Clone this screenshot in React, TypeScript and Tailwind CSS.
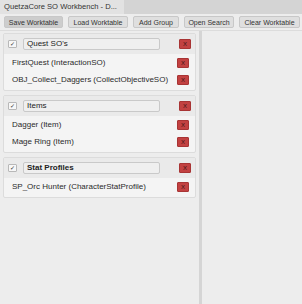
import React from 'react';

type Group = { name: string; bold?: boolean; items: string[] };

const groups: Group[] = [
  { name: "Quest SO's", items: ['FirstQuest (InteractionSO)', 'OBJ_Collect_Daggers (CollectObjectiveSO)'] },
  { name: 'Items', items: ['Dagger (Item)', 'Mage Ring (Item)'] },
  { name: 'Stat Profiles', bold: true, items: ['SP_Orc Hunter (CharacterStatProfile)'] },
];

const toolbar = [
  { label: 'Save Worktable', w: 'w-[59px]', active: true },
  { label: 'Load Worktable', w: 'w-[60px]' },
  { label: 'Add Group', w: 'w-[46px]' },
  { label: 'Open Search', w: 'w-[50px]' },
  { label: 'Clear Worktable', w: 'w-[61px]' },
];

const XButton = () => (
  <div className="w-[12px] h-[10px] bg-[#c24141] border border-[#a83434] rounded-[1px] flex items-center justify-center text-[6px] leading-none text-[#3a1414]">
    X
  </div>
);

const GroupBox = ({ group }: { group: Group }) => (
  <div className="border border-[#dcdcdc] rounded-[2px] bg-[#f4f4f4]">
    <div className="flex items-center h-[20px] bg-[#eaeaea] pl-[4px]">
      <div className="w-[9px] h-[8px] border border-[#b8b8b8] bg-[#f7f7f7] rounded-[1px] flex items-center justify-center text-[6px] leading-none text-[#333]">
        ✓
      </div>
      <div className="ml-[6px] w-[137px] h-[12px] border border-[#c9c9c9] bg-[#efefef] rounded-[2px] pl-[3px] flex items-center">
        <span className={`text-[8px] leading-none whitespace-nowrap text-[#222] ${group.bold ? 'font-semibold' : ''}`}>{group.name}</span>
      </div>
      <div className="ml-auto mr-[4px]">
        <XButton />
      </div>
    </div>
    <div className="pb-[2px]">
      {group.items.map((it) => (
        <div key={it} className="flex items-center h-[17px] pl-[8px]">
          <span className="text-[8px] leading-none whitespace-nowrap text-[#2a2a2a]">{it}</span>
          <div className="ml-auto mr-[6px]">
            <XButton />
          </div>
        </div>
      ))}
    </div>
  </div>
);

export default function App() {
  return (
    <div className="w-[302px] h-[304px] bg-[#ededed] flex flex-col overflow-hidden" style={{ fontFamily: '"Liberation Sans", Arial, sans-serif' }}>
      <div className="h-[14px] bg-[#d4d4d4] flex">
        <div className="w-[124px] bg-[#e2e2e2] pl-[4px] flex items-center text-[7.6px] leading-none whitespace-nowrap text-[#333]">
          QuetzaCore SO Workbench - D...
        </div>
      </div>
      <div className="flex items-center gap-[5px] px-[4px] h-[17px] border-b border-[#dcdcdc]">
        {toolbar.map((t) => (
          <div
            key={t.label}
            className={`${t.w} shrink-0 h-[12px] flex items-center justify-center overflow-hidden rounded-[2px] border border-[#c8c8c8] text-[7px] leading-none text-[#333] whitespace-nowrap ${t.active ? 'bg-[#cdcdcd]' : 'bg-[#dfdfdf]'}`}
          >
            {t.label}
          </div>
        ))}
      </div>
      <div className="flex flex-1">
        <div className="w-[199px] flex flex-col gap-[4px] pt-[2px] pl-[3px] pr-[3px]">
          {groups.map((g) => (
            <GroupBox key={g.name} group={g} />
          ))}
        </div>
        <div className="w-[3px] bg-[#d5d5d5]" />
        <div className="flex-1" />
      </div>
    </div>
  );
}
